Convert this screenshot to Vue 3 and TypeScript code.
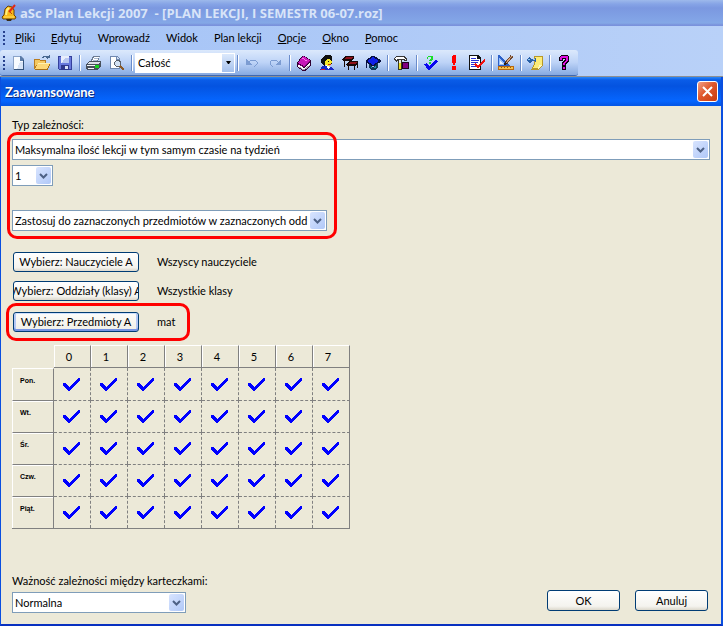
<script setup lang="ts">
import { reactive, ref } from 'vue'

interface Shape {
  d: string
  f?: string
  s?: string
  w?: number
}

interface Tool {
  label: string
  icon: Shape[]
}

const menu = [
  ['P', 'liki'],
  ['E', 'dytuj'],
  ['', 'Wprowadź'],
  ['', 'Widok'],
  ['', 'Plan lekcji'],
  ['O', 'pcje'],
  ['O', 'kno'],
  ['P', 'omoc'],
]

const bell: Shape[] = [
  { d: 'M1 13L3 11L4 5L7 2L11 3L13 6L13 11L15 13L14 15L2 15Z', f: '#f8b818', s: '#6a4408', w: 1 },
  { d: 'M5 11L6 6L8 4', s: '#fff080', w: 2 },
  { d: 'M3 13H13', s: '#fde060', w: 1 },
  { d: 'M5 15H11L10 17H6Z', f: '#3a2c18' },
  { d: 'M8 8L14 1', s: '#e02818', w: 2 },
  { d: 'M8 7L11 10', s: '#c04010', w: 1 },
]

const fileTools: Tool[] = [
  {
    label: 'Nowy',
    icon: [
      { d: 'M2 1H10L13 4V15H2Z', f: '#8ba3c8' },
      { d: 'M3 2H9V6H12V14H3Z', f: '#f8fbff' },
      { d: 'M9 1L13 5V6H9Z', f: '#5c7ca8' },
      { d: 'M12 5H13V15H3V14H12Z', f: '#34537c' },
      { d: 'M9 7H12V14H6Z', f: '#d8e4f6' },
    ],
  },
  {
    label: 'Otwórz',
    icon: [
      { d: 'M0 4H5L6 5H12V14H0Z', f: '#b87c20' },
      { d: 'M1 5H5L6 6H11V8H4L1 12Z', f: '#f4c860' },
      { d: 'M1 14L4 8H16L13 14Z', f: '#fcd878' },
      { d: 'M0.5 14.5H13.5L16 8.5', s: '#a87018', w: 1 },
      { d: 'M4 8.5H16', s: '#fff0b0', w: 1 },
      { d: 'M8.5 3V2.5H9.5V1.5H13.5V3.5', s: '#486890', w: 1 },
      { d: 'M11 3H16V0Z', f: '#486890' },
    ],
  },
  {
    label: 'Zapisz',
    icon: [
      { d: 'M1 1H15V15H2L1 14Z', f: '#34409c' },
      { d: 'M2 2H14V14H2Z', f: '#6878dc' },
      { d: 'M4 1H12V8H4Z', f: '#e8eefc' },
      { d: 'M8 3H12V8H5Z', f: '#b8c6f0' },
      { d: 'M4 10H12V15H4Z', f: '#30388c' },
      { d: 'M8 11H11V14H8Z', f: '#d8e0f8' },
    ],
  },
]

const printTools: Tool[] = [
  {
    label: 'Drukuj',
    icon: [
      { d: 'M4 7L7 1H14L12 7Z', f: '#6c7c94' },
      { d: 'M6 6L8 2H13L11 6Z', f: '#ffffff' },
      { d: 'M0 9L4 6H15V11L12 15H1L0 14Z', f: '#48505c' },
      { d: 'M2 8L4 7H14L12 9H2Z', f: '#dce0e8' },
      { d: 'M1 10H11V11H1ZM2 13H8V14H2Z', f: '#f4f6fa' },
      { d: 'M9 10H13V13H9Z', f: '#18d020' },
      { d: 'M8 3.5H12M7 5.5H11', s: '#a8b8d0', w: 1 },
    ],
  },
  {
    label: 'Podgląd wydruku',
    icon: [
      { d: 'M1 1H8L11 4V14H1Z', f: '#7088b0' },
      { d: 'M2 2H7V5H10V13H2Z', f: '#ffffff' },
      { d: 'M8 2V4H10Z', f: '#d0def4' },
      { d: 'M5 7L7 5H10L12 7V10L10 12H7L5 10Z', f: '#58606c' },
      { d: 'M6 8L7 6H10L11 8V10L10 11H7L6 10Z', f: '#d4e2f4' },
      { d: 'M11 11L15 15', s: '#8a5a28', w: 2 },
    ],
  },
]

const groups: Tool[][] = [
  [
    {
      label: 'Cofnij',
      icon: [
        { d: 'M4 8L7 5H11L13 7V9L10 12', s: '#7c9cd2', w: 1 },
        { d: 'M2 4V10H8Z', f: '#7c9cd2' },
      ],
    },
    {
      label: 'Ponów',
      icon: [
        { d: 'M12 8L9 5H5L3 7V9L6 12', s: '#7c9cd2', w: 1 },
        { d: 'M14 4V10H8Z', f: '#7c9cd2' },
      ],
    },
  ],
  [
    {
      label: 'Przedmioty',
      icon: [
        { d: 'M1 8L6 1H8L15 5V10L9 16H7L1 12Z', f: '#300030' },
        { d: 'M2 8L7 1L14 5L8 11Z', f: '#c818b8' },
        { d: 'M2 9L8 13L14 7V10L8 15L2 12Z', f: '#ffffff' },
        { d: 'M2 9L8 12L14 6', s: '#780070', w: 1 },
        { d: 'M3 12L8 15L14 10', s: '#a8a0b0', w: 1 },
        { d: 'M6 3L11 6', s: '#ff70f0', w: 1 },
      ],
    },
    {
      label: 'Nauczyciele',
      icon: [
        { d: 'M3 3L6 0H11L13 2V4L7 6L6 11L3 9L2 6Z', f: '#101010' },
        { d: 'M6 6L8 4H13V8L11 11H7L6 9Z', f: '#f8e828' },
        { d: 'M11 4H13V9H12L13 7Z', f: '#101010' },
        { d: 'M1 15L3 11H8L10 13L12 12L15 15Z', f: '#1828c8' },
        { d: 'M7 10L11 12L9 14Z', f: '#ffffff' },
        { d: 'M9 6H10V7H9Z', f: '#101010' },
        { d: 'M9 9.5H12M2 14.5H6', s: '#d02020', w: 1 },
      ],
    },
    {
      label: 'Sale',
      icon: [
        { d: 'M0 4L3 1H12V3L10 6H1Z', f: '#180808' },
        { d: 'M2 4L4 2H11L9 4Z', f: '#901018' },
        { d: 'M2.5 5V12M9.5 5V9', s: '#180808', w: 1 },
        { d: 'M4 10L7 6H16V8L14 11H5Z', f: '#180808' },
        { d: 'M6 9L8 7H15L13 9Z', f: '#901018' },
        { d: 'M6.5 10V15M12.5 10V15M15.5 8V13', s: '#180808', w: 1 },
      ],
    },
    {
      label: 'Klasy',
      icon: [
        { d: 'M0 6L7 1H9L16 5V7L9 11H7Z', f: '#081040' },
        { d: 'M2 6L8 2L14 6L8 10Z', f: '#1020e8' },
        { d: 'M4 9L8 12L13 8V13L10 15H6L4 13Z', f: '#103858' },
        { d: 'M6 12L8 13L11 11V13H6Z', f: '#1898a8' },
        { d: 'M1.5 7V13', s: '#081040', w: 1 },
      ],
    },
  ],
  [
    {
      label: 'Generuj',
      icon: [
        { d: 'M0 3L2 1H10L13 3V6H11L9 5H4L2 7L0 5Z', f: '#383838' },
        { d: 'M1 3L3 2H9L12 4V5L9 4H3L2 5Z', f: '#ffffff' },
        { d: 'M4 5H8V15H4Z', f: '#383820' },
        { d: 'M5 5H7V8H5Z', f: '#e8e8e8' },
        { d: 'M5 8H7V14H5Z', f: '#f0e020' },
        { d: 'M8 7H15V14H8Z', f: '#200020' },
        { d: 'M9 8H14V13H9Z', f: '#800080' },
      ],
    },
  ],
  [
    {
      label: 'Sprawdź',
      icon: [
        { d: 'M1 9L4 8L6 11L13 5L15 6L7 15H5Z', f: '#0808f0' },
        { d: 'M4 2L5 1H9L10 2V4L8 6H6V5L8 3L7 2H5V4H4Z', f: '#18e028' },
        { d: 'M6 7H8V9H6Z', f: '#18e028' },
      ],
    },
    {
      label: 'Problemy',
      icon: [
        { d: 'M6 1L7 0H9L10 1V6L9 10H7L6 6Z', f: '#ff0000' },
        { d: 'M6 11H10V15H6Z', f: '#ff0000' },
      ],
    },
    {
      label: 'Raport',
      icon: [
        { d: 'M0 0H9L12 3V15H0Z', f: '#101010' },
        { d: 'M1 1H8V4H11V14H1Z', f: '#ffffff' },
        { d: 'M2 3.5H7M2 5.5H10M2 7.5H9M2 9.5H6M2 11.5H7', s: '#2830d8', w: 1 },
        { d: 'M6 9L9 12L16 5', s: '#f01010', w: 2 },
      ],
    },
  ],
  [
    {
      label: 'Projekt',
      icon: [
        { d: 'M0 0H1L12 11H0Z', f: '#2c60c8' },
        { d: 'M1 3L8 10H1Z', f: '#98c0f8' },
        { d: 'M2 6L5 9H2Z', f: '#eef4ff' },
        { d: 'M0 11H16V15H0Z', f: '#b86810' },
        { d: 'M1 12H15V14H1Z', f: '#f8c048' },
        { d: 'M3.5 12V13M6.5 12V13M9.5 12V13M12.5 12V13', s: '#906010', w: 1 },
        { d: 'M8 8L14 1', s: '#6c4830', w: 3 },
        { d: 'M8 8L14 1', s: '#d8a078', w: 1 },
        { d: 'M6 10L8 8', s: '#302018', w: 2 },
      ],
    },
  ],
  [
    {
      label: 'Notatki',
      icon: [
        { d: 'M7 1H16V10L12 15H4L7 9Z', f: '#b89828' },
        { d: 'M8 2H15V9L11 13H6L8 9Z', f: '#fcec78' },
        { d: 'M15 10H12L11 14Z', f: '#fff8c0' },
        { d: 'M0 4L2 2L5 4H7L9 2V8L7 6H5L3 8L0 6Z', f: '#2860a8' },
        { d: 'M1 4H3V5H1ZM6 4H8V5H6Z', f: '#98c8f0' },
      ],
    },
  ],
  [
    {
      label: 'Pomoc',
      icon: [
        { d: 'M3 2L5 0H11L13 2V6L10 9V11H6V7L9 5V4H7V6H3Z', f: '#100010' },
        { d: 'M4 2L5 1H11L12 2V6L9 8V10H7V8L10 5V3H6V5H4Z', f: '#e010e0' },
        { d: 'M6 11H10V15H6Z', f: '#100010' },
        { d: 'M7 12H9V14H7Z', f: '#e010e0' },
      ],
    },
  ],
]

const days = ['Pon.', 'Wt.', 'Śr.', 'Czw.', 'Piąt.']
const hours = [0, 1, 2, 3, 4, 5, 6, 7]
const allowed = reactive(days.map(() => hours.map(() => true)))

const pickers = [
  { label: 'Wybierz: Nauczyciele A', value: 'Wszyscy nauczyciele', active: false },
  { label: 'Wybierz: Oddziały (klasy) A', value: 'Wszystkie klasy', active: false },
  { label: 'Wybierz: Przedmioty A', value: 'mat', active: true },
]

const view = ref('Całość')
const kind = ref('Maksymalna ilość lekcji w tym samym czasie na tydzień')
const amount = ref('1')
const scope = ref('Zastosuj do zaznaczonych przedmiotów w zaznaczonych odd')
const weight = ref('Normalna')
</script>

<template>
  <div class="app">
    <header class="titlebar">
      <svg class="bell" viewBox="0 0 16 18" aria-hidden="true">
        <path v-for="(p, i) in bell" :key="i" :d="p.d" :fill="p.f ?? 'none'" :stroke="p.s ?? 'none'" :stroke-width="p.w" />
      </svg>
      <h1>aSc Plan Lekcji 2007 &nbsp;- [PLAN LEKCJI, I SEMESTR 06-07.roz]</h1>
    </header>

    <nav class="menubar">
      <span class="grip"></span>
      <button v-for="m in menu" :key="m[0] + m[1]" type="button"><u>{{ m[0] }}</u>{{ m[1] }}</button>
    </nav>

    <div class="toolrow">
      <div class="toolbar">
        <span class="grip"></span>
        <button v-for="t in fileTools" :key="t.label" type="button" :aria-label="t.label">
          <svg viewBox="0 0 16 16"><path v-for="(p, i) in t.icon" :key="i" :d="p.d" :fill="p.f ?? 'none'" :stroke="p.s ?? 'none'" :stroke-width="p.w" /></svg>
        </button>
        <span class="sep"></span>
        <button v-for="t in printTools" :key="t.label" type="button" :aria-label="t.label">
          <svg viewBox="0 0 16 16"><path v-for="(p, i) in t.icon" :key="i" :d="p.d" :fill="p.f ?? 'none'" :stroke="p.s ?? 'none'" :stroke-width="p.w" /></svg>
        </button>
        <span class="sep"></span>
        <span class="viewbox">
          <select v-model="view" aria-label="Widok"><option>Całość</option></select>
          <span class="drop"><svg viewBox="0 0 5 3"><path d="M0 0H5L3 3H2Z" /></svg></span>
        </span>
        <template v-for="(g, gi) in groups" :key="gi">
          <span class="sep"></span>
          <button v-for="t in g" :key="t.label" type="button" :aria-label="t.label">
            <svg viewBox="0 0 16 16"><path v-for="(p, i) in t.icon" :key="i" :d="p.d" :fill="p.f ?? 'none'" :stroke="p.s ?? 'none'" :stroke-width="p.w" /></svg>
          </button>
        </template>
      </div>
    </div>

    <section class="dialog">
      <header class="caption">
        <h2>Zaawansowane</h2>
        <button class="close" type="button" aria-label="Zamknij">
          <svg viewBox="0 0 11 11"><path d="M1 1L10 10M10 1L1 10" /></svg>
        </button>
      </header>

      <div class="body">
        <label for="kind">Typ zależności:</label>
        <div class="rules">
          <span class="combo">
            <select id="kind" v-model="kind"><option>{{ kind }}</option></select>
            <span class="arrow"><svg viewBox="0 0 9 6"><path d="M1 1L4.5 4.5L8 1" /></svg></span>
          </span>
          <span class="combo tiny">
            <select v-model="amount" aria-label="Ilość lekcji"><option>1</option></select>
            <span class="arrow"><svg viewBox="0 0 9 6"><path d="M1 1L4.5 4.5L8 1" /></svg></span>
          </span>
          <span class="combo scope">
            <select v-model="scope" aria-label="Zakres"><option>{{ scope }}</option></select>
            <span class="arrow"><svg viewBox="0 0 9 6"><path d="M1 1L4.5 4.5L8 1" /></svg></span>
          </span>
          <span class="mark"></span>
        </div>

        <div class="pickers">
          <div v-for="p in pickers" :key="p.label" class="picker" :class="{ active: p.active }">
            <button class="push" type="button"><span>{{ p.label }}</span></button>
            <output>{{ p.value }}</output>
            <span v-if="p.active" class="mark"></span>
          </div>
        </div>

        <table>
          <thead>
            <tr>
              <td></td>
              <th v-for="h in hours" :key="h" scope="col">{{ h }}</th>
            </tr>
          </thead>
          <tbody>
            <tr v-for="(d, r) in days" :key="d">
              <th scope="row">{{ d }}</th>
              <td v-for="h in hours" :key="h">
                <button type="button" :aria-label="d + ' ' + h" :aria-pressed="allowed[r][h]" @click="allowed[r][h] = !allowed[r][h]">
                  <svg v-if="allowed[r][h]" viewBox="0 0 17 13"><path d="M0 5L2 5L6 9L15 0H17V2L7 13H5L0 8Z" /></svg>
                </button>
              </td>
            </tr>
          </tbody>
        </table>

        <footer>
          <div class="weight">
            <label for="weight">Ważność zależności między karteczkami:</label>
            <span class="combo">
              <select id="weight" v-model="weight"><option>Normalna</option></select>
              <span class="arrow"><svg viewBox="0 0 9 6"><path d="M1 1L4.5 4.5L8 1" /></svg></span>
            </span>
          </div>
          <button class="push" type="button"><span>OK</span></button>
          <button class="push" type="button"><span>Anuluj</span></button>
        </footer>
      </div>
    </section>
  </div>
</template>

<style>
body {
  margin: 0;
}
</style>

<style scoped>
* {
  box-sizing: border-box;
}

.app {
  display: flex;
  flex-direction: column;
  min-height: 100vh;
  font-family: Lato, "Noto Sans", sans-serif;
  font-size: 11px;
  line-height: 14px;
  color: #000;
  background: linear-gradient(90deg, #a3c2f6, #b9d1f8);
}

button,
select {
  font: inherit;
  color: inherit;
  margin: 0;
  padding: 0;
  border: 0;
  background: none;
}

h1,
h2 {
  margin: 0;
  font-size: 13px;
  line-height: 18px;
  font-weight: 700;
  white-space: nowrap;
}

.titlebar {
  display: flex;
  align-items: center;
  gap: 3px;
  height: 26px;
  padding-left: 1px;
  background: linear-gradient(#9db9eb 0, #86a4e6 4px, #7b98e0 8px, #82a4e6 20px, #84a8e6 23px, #7a92dc 25px);
}

.bell {
  width: 16px;
  height: 18px;
}

h1 {
  font-family: "Open Sans", "Noto Sans", sans-serif;
  color: #d8e4f8;
}

.menubar {
  display: flex;
  align-items: center;
  height: 24px;
}

.menubar button {
  padding: 0 8px;
}

.menubar .grip {
  margin-right: 1px;
}

.grip {
  flex: none;
  width: 3px;
  height: 14px;
  margin-left: 3px;
  background: repeating-linear-gradient(#27418e 0 2px, transparent 2px 4px) 0 0 / 2px 14px no-repeat;
}

.toolrow {
  display: flex;
  height: 27px;
  border-bottom: 1px solid #8d8f92;
}

.toolbar {
  display: flex;
  align-items: center;
  height: 26px;
  padding-right: 2px;
  border-radius: 3px;
  border-bottom: 1px solid #3f68b0;
  background: linear-gradient(#dce9fc, #bdd3f7 50%, #86a9e0);
}

.toolbar .grip {
  margin-right: 2px;
}

.toolbar > button {
  display: grid;
  place-items: center;
  width: 23px;
  height: 23px;
  padding-right: 1px;
}

.toolbar button svg {
  width: 16px;
  height: 16px;
  shape-rendering: crispEdges;
}

.sep {
  width: 2px;
  height: 16px;
  margin: 0 2px;
  border-left: 1px solid #6a8ccb;
  border-right: 1px solid #fff;
}

.viewbox {
  display: grid;
  width: 100px;
  height: 20px;
  border: 1px solid #fff;
  background: #fff;
}

.viewbox > *,
.combo > * {
  grid-area: 1 / 1;
}

select {
  appearance: none;
  width: 100%;
  outline: 0;
}

.viewbox select {
  padding: 0 14px 0 2px;
}

.drop {
  display: grid;
  place-items: center;
  justify-self: end;
  width: 12px;
  background: linear-gradient(#dce9fc, #a4c0ec);
  pointer-events: none;
}

.drop svg {
  width: 5px;
  height: 3px;
}

.dialog {
  flex: 1;
  display: flex;
  flex-direction: column;
  border: solid #0a4fe0;
  border-width: 0 2px 2px 1px;
  border-bottom-color: #0830c0;
  background: #ece9d8;
}

.caption {
  display: flex;
  align-items: center;
  justify-content: space-between;
  height: 29px;
  padding: 0 3px 0 4px;
  background: linear-gradient(#2a86f6 0, #0a5ce8 3px, #0453e0 9px, #0566ff 24px, #0458e8 28px);
}

h2 {
  color: #fff;
  text-shadow: 1px 1px 0 #0a2a80;
}

.close {
  display: grid;
  place-items: center;
  width: 21px;
  height: 21px;
  border: 1px solid #fff;
  border-radius: 3px;
  background: linear-gradient(135deg, #f0a088, #e0582c 45%, #c83c10);
}

.close svg {
  width: 11px;
  height: 11px;
}

.close path {
  fill: none;
  stroke: #fff;
  stroke-width: 2;
}

.body {
  flex: 1;
  display: flex;
  flex-direction: column;
  padding: 12px 11px 11px 11px;
}

.rules {
  position: relative;
  display: flex;
  flex-direction: column;
  gap: 5px;
  margin-top: 7px;
}

.combo {
  display: grid;
  height: 21px;
  border: 1px solid #7f9db9;
  background: #fff;
}

.combo select {
  padding: 0 18px 0 2px;
}

.tiny {
  width: 41px;
}

.scope {
  width: 315px;
  margin-top: 19px;
}

.arrow {
  display: grid;
  place-items: center;
  justify-self: end;
  width: 15px;
  margin: 1px;
  border-radius: 2px;
  background: linear-gradient(135deg, #d8e4fe, #b0c8f8);
  pointer-events: none;
}

.arrow svg {
  width: 9px;
  height: 6px;
}

.arrow path {
  fill: none;
  stroke: #4d6185;
  stroke-width: 2;
}

.mark {
  position: absolute;
  border: 3px solid #f00;
  border-radius: 10px;
  pointer-events: none;
}

.rules .mark {
  top: -7px;
  left: -5px;
  width: 330px;
  height: 107px;
}

.pickers {
  display: flex;
  flex-direction: column;
  gap: 9px;
  margin-top: 21px;
  padding-left: 1px;
}

.picker {
  position: relative;
  display: flex;
  align-items: center;
  gap: 18px;
}

.picker .mark {
  top: -9px;
  left: -7px;
  width: 184px;
  height: 38px;
}

.push {
  display: flex;
  align-items: center;
  justify-content: center;
  width: 73px;
  height: 21px;
  border: 1px solid #003c74;
  border-radius: 3px;
  background: linear-gradient(#fff, #f4f3ee 80%, #dcd8cc);
  white-space: nowrap;
  overflow: hidden;
}

.picker .push {
  width: 126px;
  height: 20px;
}

.active .push {
  background: linear-gradient(#fdfdfb, #efeee6);
  box-shadow: inset 0 -2px #7594e4, inset 0 1px #cee0fc, inset 2px 0 #b4c8f4, inset -2px 0 #b4c8f4;
}

.active {
  margin-top: 2px;
}

table {
  width: max-content;
  margin-top: 13px;
  border-spacing: 0;
  border-bottom: 1px solid #808080;
}

th,
td {
  padding: 0;
}

thead td {
  width: 42px;
}

thead th {
  width: 37px;
  height: 23px;
  border: solid #808080;
  border-width: 1px 1px 1px 0;
  border-top-color: #fff;
  box-shadow: inset 1px 0 #fff;
  font-weight: 400;
  padding-right: 6px;
}

tbody th {
  height: 32px;
  padding: 0 0 9px 7px;
  border: solid #808080;
  border-width: 1px 1px 0 1px;
  border-left-color: #fff;
  box-shadow: inset 0 1px #fff;
  text-align: left;
  font: 700 7px/9px "Liberation Sans", sans-serif;
}

tbody tr:first-child th {
  border-top-color: #fff;
  box-shadow: none;
}

tbody td {
  border: dashed #808080;
  border-width: 1px 1px 0 0;
}

tbody td:last-child {
  border-right-style: solid;
}

tbody tr:first-child td {
  border-top: 0;
}

td button {
  display: grid;
  place-items: center;
  width: 100%;
  height: 31px;
  padding-right: 2px;
}

td svg {
  width: 17px;
  height: 13px;
  shape-rendering: crispEdges;
}

td path {
  fill: #00f;
}

footer {
  display: flex;
  align-items: flex-end;
  gap: 15px;
  margin-top: auto;
  padding-right: 2px;
}

.weight {
  display: flex;
  flex-direction: column;
  gap: 4px;
  margin-right: auto;
}

.weight .combo {
  width: 174px;
}

footer .push {
  margin-bottom: 2px;
}
</style>
